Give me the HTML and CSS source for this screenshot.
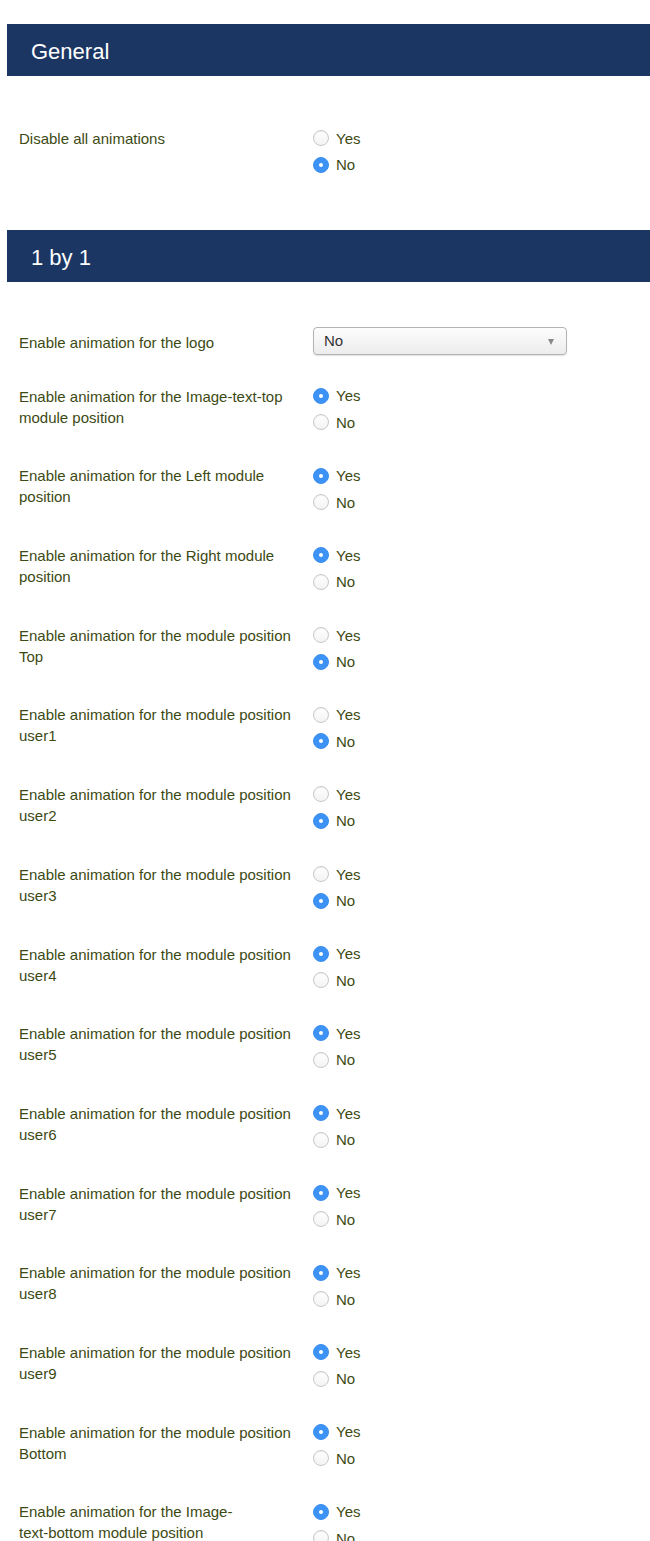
FILE: index.html
```html
<!DOCTYPE html>
<html lang="en">
<head>
  <meta charset="UTF-8">
  <meta name="viewport" content="width=device-width, initial-scale=1.0">
  <title>Animation settings</title>
  <link rel="stylesheet" href="styles.css">
</head>
<body>
  <div class="page">
    <h2 class="bar">General</h2>
    <div class="fields fields-general">
      <div class="control-group">
        <label class="control-label">Disable all animations</label>
        <div class="options">
          <label class="option"><input type="radio" name="disable_all"> Yes</label>
          <label class="option"><input type="radio" name="disable_all" checked> No</label>
        </div>
      </div>
    </div>

    <h2 class="bar">1 by 1</h2>
    <div class="fields">
      <div class="control-group select-group">
        <label class="control-label" for="logo">Enable animation for the logo</label>
        <div class="select-wrap">
          <select id="logo">
            <option>No</option>
            <option>Yes</option>
          </select>
        </div>
      </div>

      <div class="control-group">
        <label class="control-label">Enable animation for the Image-text-top module position</label>
        <div class="options">
          <label class="option"><input type="radio" name="image_top" checked> Yes</label>
          <label class="option"><input type="radio" name="image_top"> No</label>
        </div>
      </div>

      <div class="control-group">
        <label class="control-label">Enable animation for the Left module position</label>
        <div class="options">
          <label class="option"><input type="radio" name="left" checked> Yes</label>
          <label class="option"><input type="radio" name="left"> No</label>
        </div>
      </div>

      <div class="control-group">
        <label class="control-label">Enable animation for the Right module position</label>
        <div class="options">
          <label class="option"><input type="radio" name="right" checked> Yes</label>
          <label class="option"><input type="radio" name="right"> No</label>
        </div>
      </div>

      <div class="control-group">
        <label class="control-label">Enable animation for the module position Top</label>
        <div class="options">
          <label class="option"><input type="radio" name="top"> Yes</label>
          <label class="option"><input type="radio" name="top" checked> No</label>
        </div>
      </div>

      <div class="control-group">
        <label class="control-label">Enable animation for the module position user1</label>
        <div class="options">
          <label class="option"><input type="radio" name="user1"> Yes</label>
          <label class="option"><input type="radio" name="user1" checked> No</label>
        </div>
      </div>

      <div class="control-group">
        <label class="control-label">Enable animation for the module position user2</label>
        <div class="options">
          <label class="option"><input type="radio" name="user2"> Yes</label>
          <label class="option"><input type="radio" name="user2" checked> No</label>
        </div>
      </div>

      <div class="control-group">
        <label class="control-label">Enable animation for the module position user3</label>
        <div class="options">
          <label class="option"><input type="radio" name="user3"> Yes</label>
          <label class="option"><input type="radio" name="user3" checked> No</label>
        </div>
      </div>

      <div class="control-group">
        <label class="control-label">Enable animation for the module position user4</label>
        <div class="options">
          <label class="option"><input type="radio" name="user4" checked> Yes</label>
          <label class="option"><input type="radio" name="user4"> No</label>
        </div>
      </div>

      <div class="control-group">
        <label class="control-label">Enable animation for the module position user5</label>
        <div class="options">
          <label class="option"><input type="radio" name="user5" checked> Yes</label>
          <label class="option"><input type="radio" name="user5"> No</label>
        </div>
      </div>

      <div class="control-group">
        <label class="control-label">Enable animation for the module position user6</label>
        <div class="options">
          <label class="option"><input type="radio" name="user6" checked> Yes</label>
          <label class="option"><input type="radio" name="user6"> No</label>
        </div>
      </div>

      <div class="control-group">
        <label class="control-label">Enable animation for the module position user7</label>
        <div class="options">
          <label class="option"><input type="radio" name="user7" checked> Yes</label>
          <label class="option"><input type="radio" name="user7"> No</label>
        </div>
      </div>

      <div class="control-group">
        <label class="control-label">Enable animation for the module position user8</label>
        <div class="options">
          <label class="option"><input type="radio" name="user8" checked> Yes</label>
          <label class="option"><input type="radio" name="user8"> No</label>
        </div>
      </div>

      <div class="control-group">
        <label class="control-label">Enable animation for the module position user9</label>
        <div class="options">
          <label class="option"><input type="radio" name="user9" checked> Yes</label>
          <label class="option"><input type="radio" name="user9"> No</label>
        </div>
      </div>

      <div class="control-group">
        <label class="control-label">Enable animation for the module position Bottom</label>
        <div class="options">
          <label class="option"><input type="radio" name="bottom" checked> Yes</label>
          <label class="option"><input type="radio" name="bottom"> No</label>
        </div>
      </div>

      <div class="control-group">
        <label class="control-label">Enable animation for the Image-<br>text-bottom module position</label>
        <div class="options">
          <label class="option"><input type="radio" name="image_bottom" checked> Yes</label>
          <label class="option"><input type="radio" name="image_bottom"> No</label>
        </div>
      </div>
    </div>
  </div>
</body>
</html>
```

FILE: styles.css
```css
body {
  margin: 0;
  background: #fff;
  font-family: "Liberation Sans", Arial, sans-serif;
  font-size: 15px;
  color: #3d4a14;
}

.page {
  padding: 24px 0 0 7px;
}

.bar {
  margin: 0;
  height: 52px;
  padding: 4px 0 0 24px;
  box-sizing: border-box;
  display: flex;
  align-items: center;
  background: #1c3664;
  color: #fff;
  font-size: 22px;
  font-weight: normal;
}

.fields {
  padding: 45px 0 25px 12px;
}

.fields-general {
  padding-top: 49px;
}

.control-group {
  display: flex;
  margin-bottom: 26.7px;
}

.control-label {
  width: 282px;
  margin-right: 12px;
  padding-top: 3px;
  line-height: 21px;
}

.options {
  display: flex;
  flex-direction: column;
}

.option {
  display: flex;
  align-items: center;
  gap: 7px;
  height: 26.5px;
}

.option input {
  appearance: none;
  -webkit-appearance: none;
  margin: 0;
  width: 16px;
  height: 16px;
  border-radius: 50%;
  border: 1px solid #c8c8c8;
  background: linear-gradient(#fff, #f3f3f3);
  box-shadow: inset 0 1px 1px rgba(0, 0, 0, 0.06);
  position: relative;
}

.option input:checked {
  border-color: #3d8fee;
  background: #3d93f5;
  box-shadow: none;
}

.option input:checked::after {
  content: "";
  position: absolute;
  left: 5px;
  top: 5px;
  width: 4px;
  height: 4px;
  border-radius: 50%;
  background: #fff;
}

.select-group {
  align-items: center;
  margin-bottom: 28px;
}

.select-group .control-label {
  padding-top: 4px;
}

.select-wrap {
  position: relative;
  width: 254px;
}

.select-wrap select {
  appearance: none;
  -webkit-appearance: none;
  width: 100%;
  height: 28px;
  padding: 0 10px;
  border: 1px solid #b4b4b4;
  border-radius: 4px;
  background: linear-gradient(#fdfdfd, #ececec);
  box-shadow: 0 1px 1px rgba(0, 0, 0, 0.12);
  font-family: inherit;
  font-size: 15px;
  color: #333;
}

.select-wrap::after {
  content: "";
  position: absolute;
  right: 13px;
  top: 12px;
  border-left: 3.5px solid transparent;
  border-right: 3.5px solid transparent;
  border-top: 6px solid #888;
  pointer-events: none;
}
```
